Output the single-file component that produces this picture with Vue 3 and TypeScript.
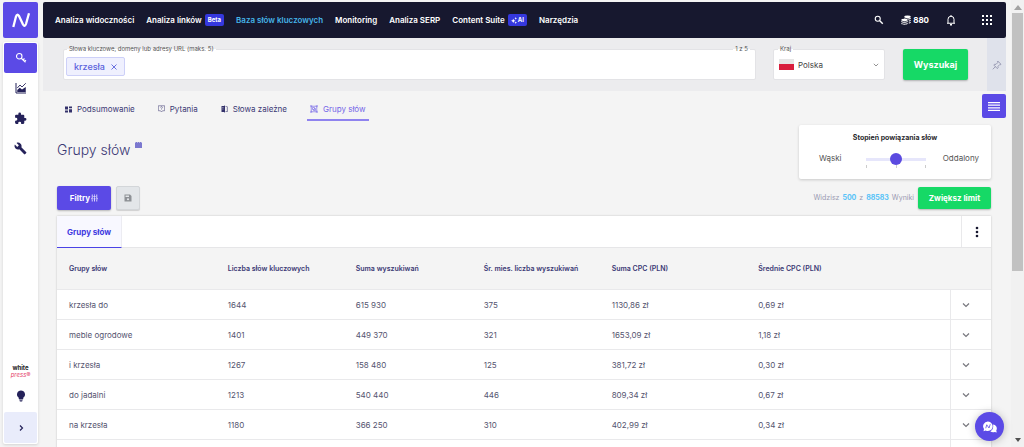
<script setup lang="ts">
import { ref } from 'vue'

interface NavItem { label: string; badge?: string; sparkle?: boolean; active?: boolean }
interface Group { name: string; count: string; sum: string; avg: string; cpcSum: string; cpcAvg: string }

const nav: NavItem[] = [
  { label: 'Analiza widoczności' },
  { label: 'Analiza linków', badge: 'Beta' },
  { label: 'Baza słów kluczowych', active: true },
  { label: 'Monitoring' },
  { label: 'Analiza SERP' },
  { label: 'Content Suite', badge: 'AI', sparkle: true },
  { label: 'Narzędzia' },
]

const tabs = [
  { id: 'summary', label: 'Podsumowanie' },
  { id: 'questions', label: 'Pytania' },
  { id: 'related', label: 'Słowa zależne' },
  { id: 'groups', label: 'Grupy słów' },
]

const columns = [
  'Grupy słów',
  'Liczba słów kluczowych',
  'Suma wyszukiwań',
  'Śr. mies. liczba wyszukiwań',
  'Suma CPC (PLN)',
  'Średnie CPC (PLN)',
]

const rows: Group[] = [
  { name: 'krzesła do', count: '1644', sum: '615 930', avg: '375', cpcSum: '1130,86 zł', cpcAvg: '0,69 zł' },
  { name: 'meble ogrodowe', count: '1401', sum: '449 370', avg: '321', cpcSum: '1653,09 zł', cpcAvg: '1,18 zł' },
  { name: 'i krzesła', count: '1267', sum: '158 480', avg: '125', cpcSum: '381,72 zł', cpcAvg: '0,30 zł' },
  { name: 'do jadalni', count: '1213', sum: '540 440', avg: '446', cpcSum: '809,34 zł', cpcAvg: '0,67 zł' },
  { name: 'na krzesła', count: '1180', sum: '366 250', avg: '310', cpcSum: '402,99 zł', cpcAvg: '0,34 zł' },
]

const country = ref('Polska')
const relation = ref(1)
const query = ref('')
</script>

<template>
  <div class="app">
    <aside class="side">
      <a class="logo" href="#" aria-label="Strona główna">
        <svg width="20" height="18" viewBox="0 0 20 18"><path d="M2.300 16L5 5.500Q6 2.300 8 5L12 13.500Q13.800 16.500 15 13L18 2.300" fill="none" stroke="#fff" stroke-width="2.300" stroke-linejoin="round" /></svg>
      </a>
      <nav class="rail">
        <a class="rail-item on" href="#" aria-label="Słowa kluczowe">
          <svg width="12" height="12" viewBox="0 0 24 24" fill="none" stroke="#fff" stroke-width="2.200"><circle cx="8.500" cy="8.500" r="5.500" /><path d="M12.500 12.500L21 20.500M16 16l3-3M19 19l3-2.500" /></svg>
        </a>
        <a class="rail-item" href="#" aria-label="Wykresy">
          <svg width="12" height="12" viewBox="0 0 24 24"><path d="M2 2v20h20" fill="none" stroke="#25225a" stroke-width="2" /><path d="M4.500 20v-4l5-4.500 4.500 3.500 7.500-5V20z" fill="#25225a" /><path d="M4.500 12l5.500-6 4 4 7.500-7.500" fill="none" stroke="#25225a" stroke-width="1.800" /></svg>
        </a>
        <a class="rail-item" href="#" aria-label="Moduły">
          <svg width="13" height="13" viewBox="0 0 24 24" fill="#25225a"><path d="M20.500 11H19V7a2 2 0 0 0-2-2h-4V3.500a2.500 2.500 0 0 0-5 0V5H4a2 2 0 0 0-2 2v3.800h1.500a2.700 2.700 0 0 1 0 5.400H2V20a2 2 0 0 0 2 2h3.800v-1.500a2.700 2.700 0 0 1 5.400 0V22H17a2 2 0 0 0 2-2v-4h1.500a2.500 2.500 0 0 0 0-5z" /></svg>
        </a>
        <a class="rail-item" href="#" aria-label="Narzędzia">
          <svg width="13" height="13" viewBox="0 0 24 24" fill="#25225a"><path d="M22.700 19l-9.100-9.100c.9-2.300.4-5-1.500-6.900-2-2-5-2.400-7.400-1.300L9 6 6 9 1.600 4.700C.4 7.100.9 10.100 2.900 12.100c1.900 1.900 4.600 2.400 6.900 1.500l9.100 9.100c.4.4 1 .4 1.400 0l2.300-2.300c.5-.4.5-1.100.1-1.400z" /></svg>
        </a>
        <a class="partner" href="#"><span>white</span><em>press®</em></a>
        <a class="hint" href="#" aria-label="Wskazówki">
          <svg width="12" height="12" viewBox="0 0 24 24" fill="#25225a"><path d="M9 21.500c0 .8.700 1.500 1.500 1.500h3c.8 0 1.500-.7 1.500-1.500V20.500H9zM12 1a8 8 0 0 0-4.500 14.600V17.500c0 .8.700 1.500 1.500 1.500h6c.8 0 1.500-.7 1.500-1.500v-1.900A8 8 0 0 0 12 1z" /></svg>
        </a>
        <button class="expand" type="button" aria-label="Rozwiń menu">
          <svg width="8" height="8" viewBox="0 0 8 8"><path d="M3 1.500L5.500 4 3 6.500" fill="none" stroke="#25225a" stroke-width="1.200" /></svg>
        </button>
      </nav>
    </aside>

    <main class="main">
      <header class="topbar">
        <nav class="menu">
          <a v-for="n in nav" :key="n.label" href="#" :class="{ active: n.active }">
            {{ n.label }}
            <span v-if="n.badge" class="badge">
              <svg v-if="n.sparkle" width="6" height="7" viewBox="0 0 12 14" fill="#fff"><path d="M4.500 3.500L6 6.500l3 1.200-3 1.200-1.500 3-1.500-3-3-1.200 3-1.200zM9.500 0l.8 2 1.700.6-1.700.7-.8 2-.8-2L7 2.600 8.700 2zM9.500 9l.8 1.700 1.700.7-1.700.7-.8 1.700-.8-1.700-1.700-.7 1.700-.7z" /></svg>
              {{ n.badge }}
            </span>
          </a>
        </nav>
        <div class="tools">
          <button type="button" aria-label="Szukaj"><svg width="10" height="10" viewBox="0 0 20 20" fill="none" stroke="#fff" stroke-width="2.200"><circle cx="7.500" cy="7.500" r="5" /><path d="M11.500 11.500l6 6" stroke-width="2.800" /></svg></button>
          <a class="credits" href="#">
            <svg width="10" height="10" viewBox="0 0 20 20" fill="#fff"><ellipse cx="13" cy="3.500" rx="6.500" ry="2.500" /><path d="M6.500 5.500c2 2 10 2 13 0v2c-1 1-2.500 1.500-5 1.600C13 7.500 9.500 7 6.500 7zM15.500 11c2-.2 3-.7 4-1.400v2c-1 1-2 1.400-4 1.600zM15.500 15c2-.2 3-.7 4-1.400v1.900c-1 1-2 1.400-4 1.600z" /><ellipse cx="7" cy="10" rx="6.500" ry="2.300" /><path d="M.5 12c2 2 10 2 13 0v2c-3 2-11 2-13 0zM.5 15.800c2 2 10 2 13 0v1.700c-3 2.400-11 2.400-13 0z" /></svg>
            880
          </a>
          <button type="button" aria-label="Powiadomienia"><svg width="10" height="12" viewBox="0 0 20 24" fill="none" stroke="#fff" stroke-width="2"><path d="M2 18.500h16M4 18V10.500a6 6 0 0 1 12 0V18M10 2v2.500" /><path d="M8 21.500h4" stroke-width="2.600" /></svg></button>
          <button type="button" class="apps" aria-label="Aplikacje"><svg width="10" height="10" viewBox="0 0 10 10" fill="#fff"><template v-for="y in 3" :key="y"><rect v-for="x in 3" :key="x" :x="(x - 1) * 4" :y="(y - 1) * 4" width="2" height="2" /></template></svg></button>
        </div>
      </header>

      <form class="search" @submit.prevent>
        <div class="field keywords">
          <label for="kw">Słowa kluczowe, domeny lub adresy URL (maks. 5)</label>
          <span class="counter">1 z 5</span>
          <span class="chip">krzesła
            <button type="button" aria-label="Usuń"><svg width="6" height="6" viewBox="0 0 6 6"><path d="M.5.500l5 5M5.500.500l-5 5" stroke="#5a62dc" stroke-width=".9" /></svg></button>
          </span>
          <input id="kw" v-model="query" type="text" />
        </div>
        <div class="field country">
          <label for="country">Kraj</label>
          <span class="flag"></span>
          <select id="country" v-model="country"><option>Polska</option></select>
          <svg class="caret" width="6" height="4" viewBox="0 0 6 4"><path d="M.800.800L3 3 5.200.800" fill="none" stroke="#888" stroke-width=".9" /></svg>
        </div>
        <button class="go" type="submit">Wyszukaj</button>
        <button class="pin" type="button" aria-label="Przypnij">
          <svg width="10" height="10" viewBox="0 0 20 20" fill="none" stroke="#8f90ab" stroke-width="1.700" stroke-linejoin="round"><path d="M11.500 2l6.500 6.500-1.500 1-1-.3-3.500 3.500.2 3-1.500 1.500L3.500 10 5 8.500l3 .2 3.500-3.500-.5-1.500zM7 13.200L1.500 18.500" /></svg>
        </button>
      </form>

      <div class="tabrow">
        <nav class="tabs">
          <a v-for="t in tabs" :key="t.id" href="#" :class="{ current: t.id === 'groups' }">
            <svg v-if="t.id === 'summary'" width="7" height="7" viewBox="0 0 14 14" fill="#34326b"><path d="M0 1h6v6H0zM8 1h6v3.500H8zM0 9h6v4H0zM8 6.500h6V13H8z" /></svg>
            <svg v-else-if="t.id === 'questions'" width="7" height="8" viewBox="0 0 14 16" fill="none" stroke="#5c5a88" stroke-width="1.300"><path d="M.700 1.500h12.600v10H9L7 14l-2-2.500H.700z" /><path d="M5.300 5a1.700 1.700 0 1 1 2.400 1.500L7 7.300V8M7 9v1" /></svg>
            <svg v-else-if="t.id === 'related'" width="7" height="8" viewBox="0 0 14 16" fill="#34326b"><path d="M1 2h5.500V1H8v14H6.500v-1H1zM9 3h4v11H9v-1.200h2.800V4.200H9z" /><path d="M2.500 5H5M2.500 8H5" stroke="#f4f4f4" /></svg>
            <svg v-else width="8" height="8" viewBox="0 0 16 16" fill="none" stroke="#7567e8" stroke-width="1.300"><path d="M2.500 2.500h11v11h-11z" /><path d="M5 5h4v4H5zM7 9v2h4V7H9" /><path d="M.500.500h3v3h-3zM12.500.500h3v3h-3zM.500 12.500h3v3h-3zM12.500 12.500h3v3h-3z" stroke-width=".9" /></svg>
            {{ t.label }}
          </a>
        </nav>
        <button class="burger" type="button" aria-label="Menu"><svg width="12" height="9" viewBox="0 0 12 9" fill="#fff"><path d="M0 0h12v1.200H0zM0 2.600h12v1.200H0zM0 5.200h12v1.200H0zM0 7.800h12V9H0z" /></svg></button>
      </div>

      <section class="content">
        <div class="heading">
          <h1>Grupy słów<svg width="7" height="6" viewBox="0 0 14 12"><path d="M0 1h2V0h2v1h2V0h2v1h2V0h2v1h2v11H0z" fill="#7b78cf" /></svg></h1>
          <div class="relation">
            <label for="rel">Stopień powiązania słów</label>
            <div class="scale">
              <span>Wąski</span>
              <div class="slider">
                <input id="rel" v-model.number="relation" type="range" min="0" max="2" step="1" />
                <div class="ticks"><i></i><i></i><i></i></div>
              </div>
              <span>Oddalony</span>
            </div>
          </div>
        </div>

        <div class="actions">
          <button class="filter" type="button">Filtry<svg width="7" height="8" viewBox="0 0 14 16" fill="none" stroke="#fff" stroke-width="1.500"><path d="M2.500 1v7M0 9.500h5M2.500 11v4M7 1v2.500M4.800 5h4.400M7 6.500V15M11.500 1v7M9 9.500h5M11.500 11v4" /></svg></button>
          <button class="save" type="button" aria-label="Zapisz"><svg width="8" height="8" viewBox="0 0 16 16"><path d="M1 1h11l3 3v11H1z" fill="#8e9196" /><path d="M3 3h7v3H3z" fill="#e3e6e9" /><circle cx="8" cy="10.500" r="2.200" fill="#e3e6e9" /></svg></button>
          <p class="results">Widzisz <b>500</b> z <b>88583</b> Wyniki</p>
          <button class="limit" type="button">Zwiększ limit</button>
        </div>

        <div class="card">
          <div class="card-head">
            <a class="card-tab" href="#">Grupy słów</a>
            <button type="button" class="more" aria-label="Więcej"><svg width="4" height="12" viewBox="0 0 4 12" fill="#17172f"><circle cx="2" cy="2" r="1.300" /><circle cx="2" cy="6" r="1.300" /><circle cx="2" cy="10" r="1.300" /></svg></button>
          </div>
          <table>
            <colgroup><col class="c1" /><col class="c2" /><col class="c2" /><col class="c2" /><col class="c3" /><col /><col class="c4" /></colgroup>
            <thead>
              <tr><th v-for="c in columns" :key="c" scope="col">{{ c }}</th><td></td></tr>
            </thead>
            <tbody>
              <tr v-for="r in rows" :key="r.name">
                <td>{{ r.name }}</td><td>{{ r.count }}</td><td>{{ r.sum }}</td><td>{{ r.avg }}</td><td>{{ r.cpcSum }}</td><td>{{ r.cpcAvg }}</td>
                <td class="open"><button type="button" :aria-label="'Rozwiń ' + r.name"><svg width="8" height="6" viewBox="0 0 8 6"><path d="M1 1.500L4 4.500 7 1.500" fill="none" stroke="#77777d" stroke-width="1.200" /></svg></button></td>
              </tr>
              <tr><td colspan="6"></td><td class="open"></td></tr>
            </tbody>
          </table>
        </div>
      </section>
    </main>

    <div class="scrollbar" aria-hidden="true">
      <svg width="8" height="5" viewBox="0 0 8 5"><path d="M4 0l4 5H0z" fill="#a3a3a3" /></svg>
      <span class="thumb"></span>
      <svg width="6" height="4" viewBox="0 0 6 4"><path d="M0 0h6L3 4z" fill="#505050" /></svg>
    </div>

    <button class="chat" type="button" aria-label="Czat">
      <svg width="14" height="12" viewBox="0 0 28 24"><path d="M20 7a8 8 0 0 1 6.500 12l1 4-4-1a9 9 0 0 1-9-1.500C19 19 21.500 13 20 7z" fill="#fff" /><path d="M10 1a9.500 9.500 0 1 1-4.500 18L1 20.500l1-4.500A9.500 9.500 0 0 1 10 1z" fill="#fff" /><path d="M5.500 14.500L7.500 7.500l4.500 6.500 2.500-7.500" fill="none" stroke="#5b4ae6" stroke-width="1.600" /></svg>
    </button>
  </div>
</template>

<style>
body { margin: 0; background: #f4f4f4; }
</style>

<style scoped>
* { box-sizing: border-box; }
.app { display: flex; height: 100vh; overflow: hidden; background: #f4f4f4; color: #3b3974; font: 400 8px/12px Inter, "Open Sans", sans-serif; }
a { color: inherit; text-decoration: none; }
button { font: inherit; border: 0; margin: 0; padding: 0; background: none; color: inherit; display: flex; align-items: center; justify-content: center; cursor: pointer; }
svg { flex: none; display: block; }

.side { flex: none; width: 35px; margin: 2px 5px 3px 3px; display: flex; flex-direction: column; gap: 4px; }
.logo { height: 36px; display: flex; align-items: center; justify-content: center; background: #5b4ae6; border-radius: 2px; }
.rail { flex: 1; display: flex; flex-direction: column; padding: 1px; background: #fff; border-radius: 2px; box-shadow: 0 1px 3px rgba(0, 0, 0, .14); }
.rail-item { height: 30px; display: flex; align-items: center; justify-content: center; border-radius: 2px; }
.rail-item.on { background: #5b4ae6; }
.partner { margin-top: auto; padding-bottom: 12px; text-align: center; font-size: 6px; line-height: 7px; font-weight: 700; color: #222; }
.partner span, .partner em { display: block; }
.partner em { color: #e5486f; font-weight: 400; }
.hint { display: flex; justify-content: center; padding-bottom: 10px; }
.expand { height: 31px; background: #e9ecfb; border-radius: 2px; }

.main { flex: 1; min-width: 0; padding-top: 2px; margin-right: 5px; }
.topbar { height: 36px; display: flex; align-items: center; justify-content: space-between; padding: 0 14px 0 12px; background: #17182f; border-radius: 2px; color: #fff; font-weight: 600; }
.menu, .tools { display: flex; align-items: center; gap: 12px; }
.menu a { display: flex; align-items: center; white-space: nowrap; }
.menu .active { color: #45b5e8; }
.badge { display: flex; align-items: center; gap: 1px; height: 12px; padding: 0 3px; margin-left: 3px; border-radius: 2px; background: #3538de; color: #fff; font-size: 6px; font-weight: 700; }
.tools { gap: 17px; }
.credits { display: flex; align-items: center; gap: 2px; font-weight: 700; }
.apps { margin-left: 9px; }

.search { height: 53px; display: flex; align-items: center; padding-left: 20px; background: #ececee; }
.field { position: relative; display: flex; align-items: center; height: 31px; background: #fff; border: 1px solid #e3e3e6; border-radius: 2px; }
.field label, .counter { position: absolute; top: -5px; left: 3px; padding: 0 2px; font-size: 6px; line-height: 8px; color: #555; white-space: nowrap; background: linear-gradient(#ececee 50%, #fff 50%); }
.keywords { flex: 1; margin-right: 17px; padding: 4px 2px 0; }
.keywords .counter { left: auto; right: 5px; }
.chip { display: flex; align-items: center; gap: 6px; height: 19px; padding: 0 7px; border: 1px solid #cdd0f8; border-radius: 2px; background: #eff0fe; color: #5a62dc; font-size: 9px; font-weight: 500; }
.keywords input { flex: 1; min-width: 0; border: 0; outline: 0; background: none; font: inherit; }
.country { width: 112px; margin-right: 18px; padding: 0 5px; }
.country label { left: 4px; }
.flag { width: 15px; height: 11px; background: linear-gradient(#e6e6e6 50%, #d81e3d 50%); }
.country select { flex: 1; min-width: 0; appearance: none; border: 0; outline: 0; padding: 0 0 0 4px; background: none; color: #444; font: inherit; }
.go { width: 65px; height: 31px; margin-right: 19px; border-radius: 2px; background: #16d966; color: #fff; font-size: 9px; font-weight: 700; box-shadow: 0 1px 2px rgba(0, 0, 0, .25); }
.pin { width: 19px; align-self: stretch; background: #dfe2eb; }

.tabrow { display: flex; justify-content: space-between; align-items: flex-start; padding-top: 3px; }
.tabs { display: flex; gap: 17px; margin: 3px 0 0 19px; }
.tabs a { display: flex; align-items: center; gap: 5px; height: 24px; padding: 2px 3px 0; border-bottom: 2px solid transparent; white-space: nowrap; }
.tabs .current { color: #7567e8; border-color: #8f83ef; }
.burger { width: 24px; height: 24px; border-radius: 2px; background: #5b4ae6; }

.content { padding: 4px 15px 0 14px; }
.heading { display: flex; justify-content: space-between; align-items: flex-start; }
h1 { display: flex; gap: 4px; margin: 17px 0 0; font-size: 14px; line-height: 16px; font-weight: 300; }
.relation { width: 192px; height: 54px; padding: 7px 12px 0; background: #fff; border-radius: 2px; box-shadow: 0 1px 3px rgba(0, 0, 0, .18); color: #555; }
.relation label { display: block; text-align: center; font-size: 7px; font-weight: 700; color: #2a2a2e; }
.scale { display: flex; justify-content: space-between; align-items: flex-start; padding: 8px 0 0 8px; }
.slider { width: 60px; margin-left: 8px; padding-top: 1px; }
.slider input { display: block; width: 100%; height: 12px; margin: 0; appearance: none; background: linear-gradient(#e6e6fb, #e6e6fb) center / 100% 3px no-repeat; }
.slider input::-webkit-slider-thumb { appearance: none; width: 12px; height: 12px; border-radius: 50%; background: #5b4ae0; }
.ticks { display: flex; justify-content: space-between; }
.ticks i { width: 1px; height: 3px; background: #ccc; }

.actions { display: flex; align-items: center; margin-top: 7px; height: 24px; }
.filter, .limit { border-radius: 2px; color: #fff; font-weight: 700; box-shadow: 0 1px 2px rgba(0, 0, 0, .25); }
.filter { width: 54px; height: 24px; gap: 1px; background: #5b4ae6; }
.save { width: 24px; height: 24px; margin-left: 5px; border: 1px solid #d3d6d9; border-radius: 2px; background: #e3e6e9; box-shadow: 0 1px 1px rgba(0, 0, 0, .15); }
.results { margin: 0 4px 0 auto; font-size: 7px; color: #9a9ab2; }
.results b { color: #58c3f8; margin: 0 1px; }
.limit { width: 73px; height: 22px; background: #16d966; }

.card { margin-top: 6px; background: #fff; box-shadow: 0 0 2px rgba(0, 0, 0, .2); }
.card-head { display: flex; justify-content: space-between; height: 32px; border-bottom: 1px solid #e6e6e8; }
.card-tab { display: flex; align-items: center; height: 32px; padding: 0 10px; background: #f8f8ff; border-right: 1px solid #ececf2; border-bottom: 1px solid #4a42e6; color: #4038e0; font-weight: 700; }
.more { width: 30px; border-left: 1px solid #e9e9eb; }
table { width: 100%; table-layout: fixed; border-collapse: separate; border-spacing: 0; }
.c1 { width: 17%; }
.c2 { width: 13.7%; }
.c3 { width: 15.7%; }
.c4 { width: 41px; }
th, td { padding: 0 0 0 12px; text-align: left; border-bottom: 1px solid #e9e9eb; white-space: nowrap; }
thead th, thead td { height: 42px; background: #f4f4f4; font-size: 7px; font-weight: 600; }
tbody td { height: 30px; color: #55546f; }
td.open { border-left: 1px solid #e9e9eb; padding-left: 11px; }

.scrollbar { flex: none; width: 13px; display: flex; flex-direction: column; align-items: center; padding: 5px 0; background: #f1f1f1; }
.thumb { width: 11px; height: 59%; margin: 3px 0 auto; background: #c1c1c1; }
.chat { position: fixed; right: 20px; bottom: 6px; width: 29px; height: 29px; border-radius: 50%; background: #5b4ae6; box-shadow: 0 1px 8px rgba(0, 0, 0, .25); }
</style>
